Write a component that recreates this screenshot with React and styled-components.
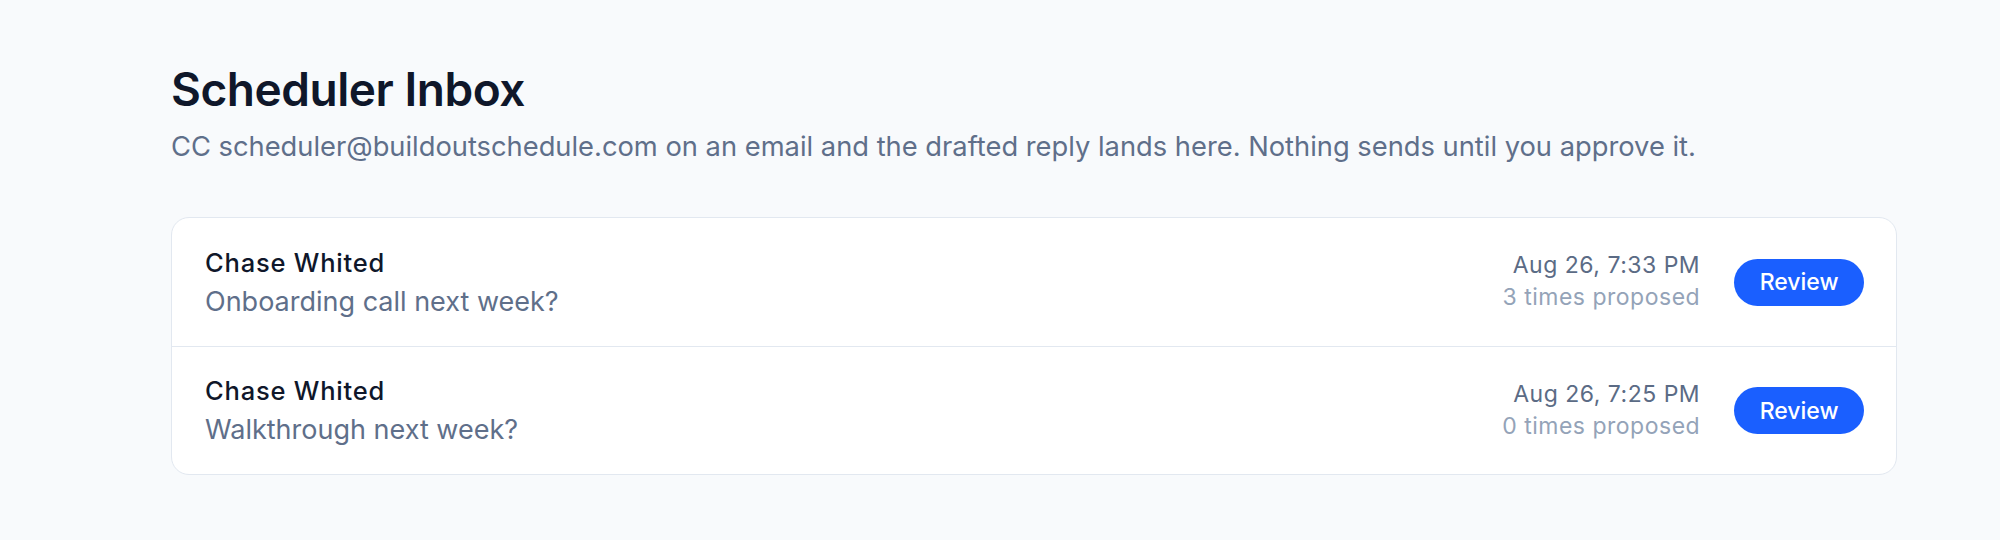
import React from "react";
import styled, { createGlobalStyle } from "styled-components";

const GlobalStyle = createGlobalStyle`
  html, body {
    margin: 0;
    padding: 0;
    background: #f8fafc;
  }
  body {
    font-family: Inter, "Noto Sans", "Liberation Sans", sans-serif;
    -webkit-font-smoothing: antialiased;
  }
  * { box-sizing: border-box; }
`;

const Page = styled.main`
  min-height: 540px;
  background: #f8fafc;
  padding: 62px 103px 40px 171px;
`;

const Header = styled.header`
  display: flex;
  flex-direction: column;
  gap: 9px;
  margin-bottom: 49px;
`;

const Title = styled.h1`
  margin: 0;
  font-size: 46px;
  line-height: 55px;
  font-weight: 600;
  letter-spacing: -0.01em;
  color: #0f172a;
`;

const Subtitle = styled.p`
  margin: 0;
  font-size: 27.3px;
  line-height: 42px;
  font-weight: 400;
  color: #5f6f8a;
`;

const Card = styled.section`
  background: #ffffff;
  border: 1px solid #e2e8f0;
  border-radius: 18px;
  overflow: hidden;
`;

const Row = styled.div`
  display: flex;
  align-items: center;
  height: 128px;
  padding: 0 32px 0 33px;
  gap: 34px;
  & + & {
    border-top: 1px solid #e2e8f0;
  }
`;

const Main = styled.div`
  flex: 1;
  display: flex;
  flex-direction: column;
  gap: 3px;
  min-width: 0;
`;

const Name = styled.div`
  font-size: 25.5px;
  line-height: 36px;
  font-weight: 500;
  letter-spacing: 0.8px;
  color: #0f172a;
`;

const Subject = styled.div`
  font-size: 27px;
  line-height: 36px;
  color: #5f6f8a;
`;

const Meta = styled.div`
  display: flex;
  flex-direction: column;
  align-items: flex-end;
  gap: 2px;
  margin-top: -2px;
`;

const Time = styled.div`
  font-size: 23px;
  line-height: 30px;
  letter-spacing: 0.5px;
  color: #5b6b85;
`;

const Count = styled.div`
  font-size: 23px;
  line-height: 30px;
  letter-spacing: 0.5px;
  color: #94a3b8;
`;

const ReviewButton = styled.button`
  height: 47px;
  padding: 0 25.5px;
  border: none;
  border-radius: 999px;
  background: #1a5fff;
  color: #ffffff;
  font-family: inherit;
  font-size: 23px;
  font-weight: 500;
  cursor: pointer;
`;

const items = [
  { name: "Chase Whited", subject: "Onboarding call next week?", time: "Aug 26, 7:33 PM", count: 3 },
  { name: "Chase Whited", subject: "Walkthrough next week?", time: "Aug 26, 7:25 PM", count: 0 },
];

export default function App() {
  return (
    <>
      <GlobalStyle />
      <Page>
        <Header>
          <Title>Scheduler Inbox</Title>
          <Subtitle>
            CC scheduler@buildoutschedule.com on an email and the drafted reply lands here. Nothing sends until you approve it.
          </Subtitle>
        </Header>
        <Card>
          {items.map((it, i) => (
            <Row key={i}>
              <Main>
                <Name>{it.name}</Name>
                <Subject>{it.subject}</Subject>
              </Main>
              <Meta>
                <Time>{it.time}</Time>
                <Count>{it.count} times proposed</Count>
              </Meta>
              <ReviewButton>Review</ReviewButton>
            </Row>
          ))}
        </Card>
      </Page>
    </>
  );
}
